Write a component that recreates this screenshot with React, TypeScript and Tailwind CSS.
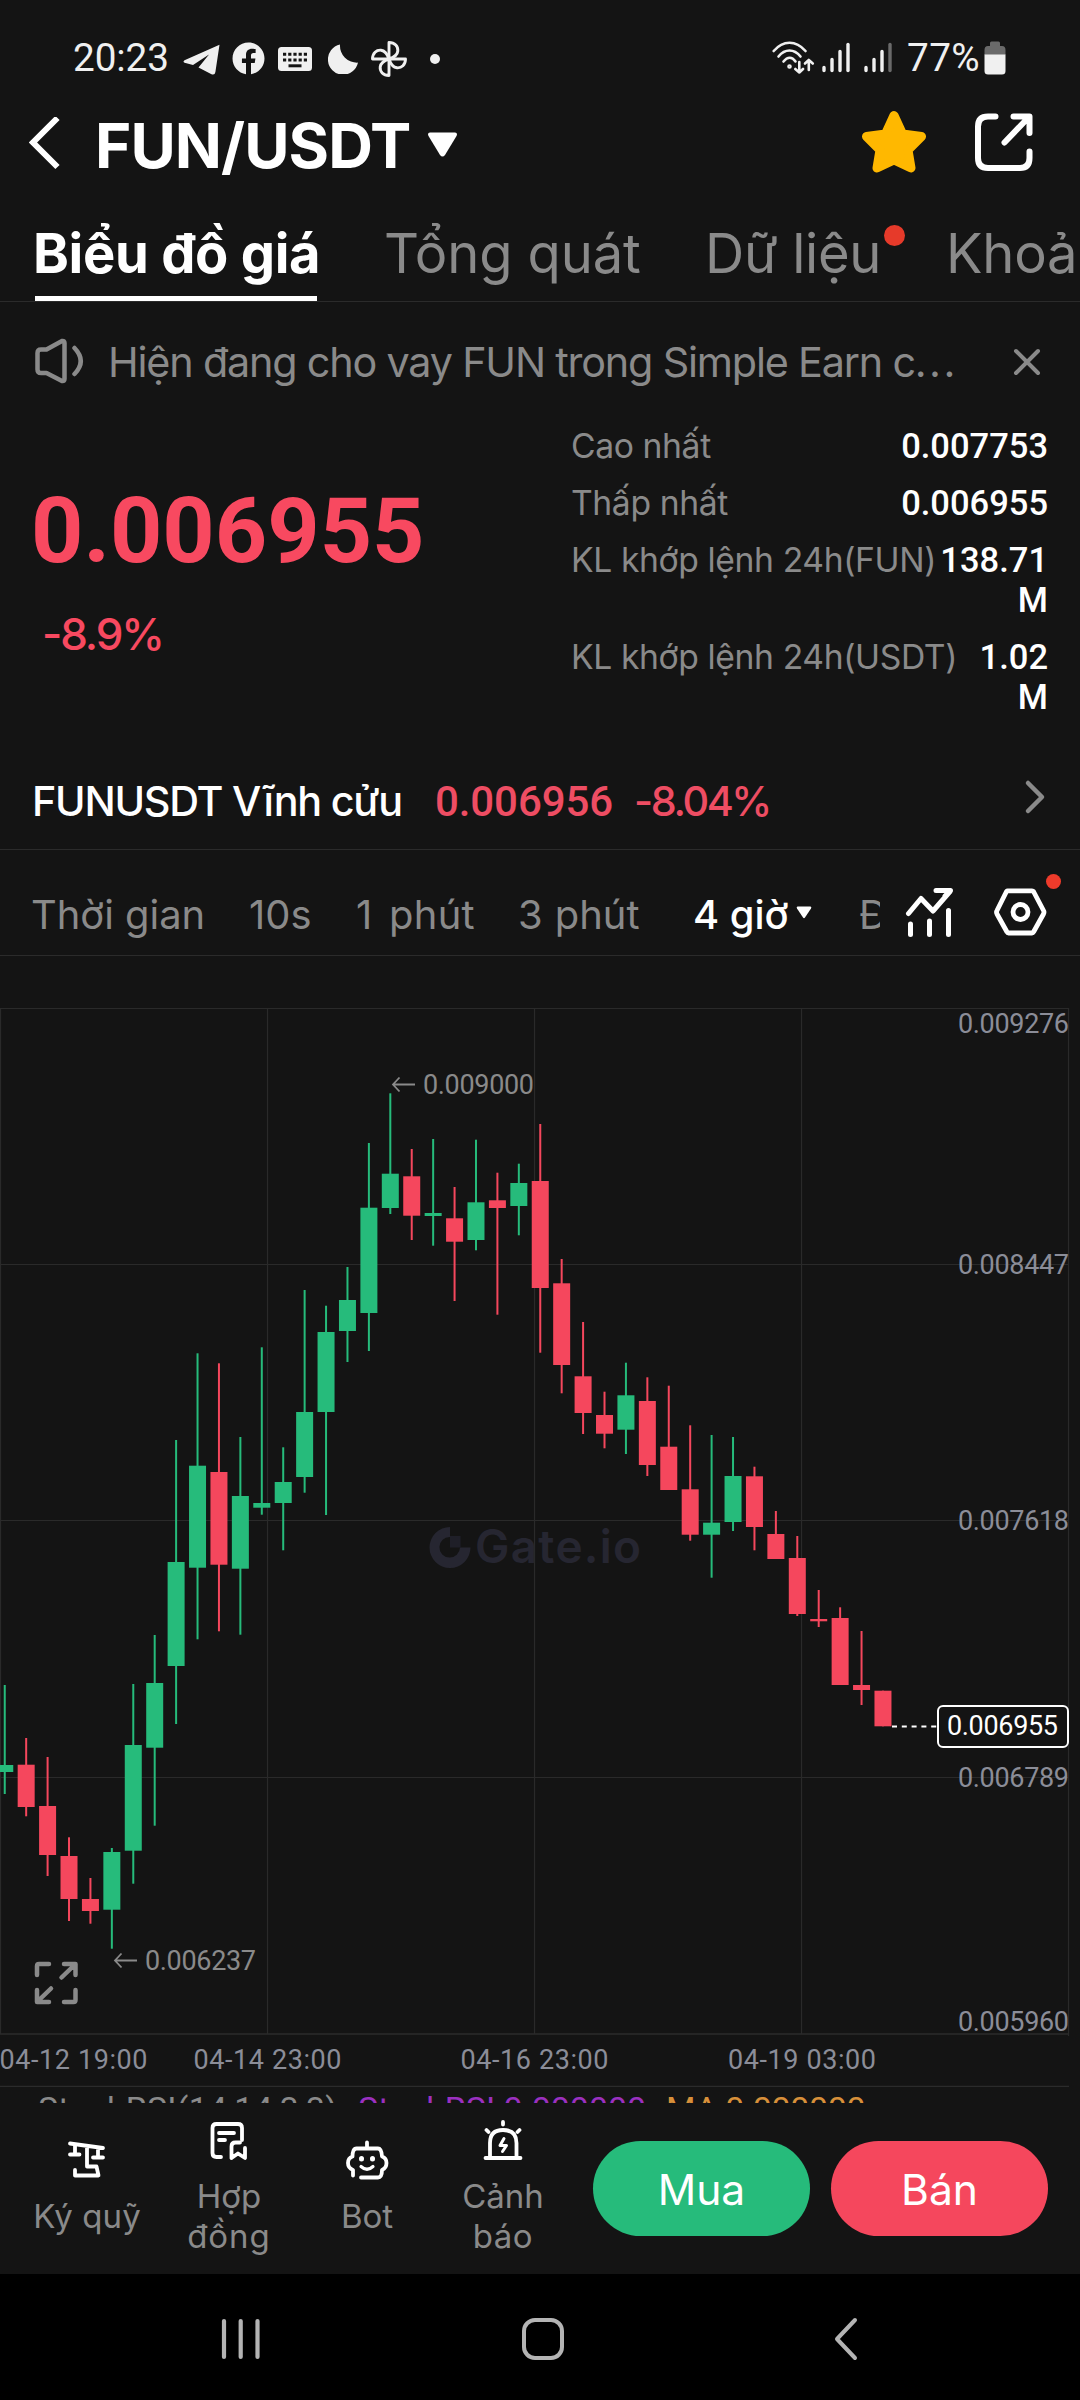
import { ReactNode } from "react";
import { FaFacebook } from "react-icons/fa";

type Candle = [string, number, number, number, number];

// direction, wick top, body top, body bottom, wick bottom
const candles: Candle[] = [
  ["up", 1685, 1765, 1772, 1794],
  ["down", 1738, 1764.7, 1807, 1816.3],
  ["down", 1757, 1806, 1855, 1876],
  ["down", 1837.3, 1856, 1899, 1921],
  ["down", 1878, 1899, 1911, 1923.7],
  ["up", 1848, 1852, 1909.7, 1948.7],
  ["up", 1684, 1745, 1850.7, 1883.7],
  ["up", 1635, 1683, 1747.7, 1825.7],
  ["up", 1440, 1562, 1666, 1724],
  ["up", 1353.3, 1465.7, 1567.7, 1639.3],
  ["down", 1363.3, 1472, 1564.7, 1631.3],
  ["up", 1437, 1496, 1568.7, 1634.7],
  ["up", 1347.3, 1503, 1507.7, 1514.7],
  ["up", 1447.3, 1482, 1503, 1550.3],
  ["up", 1290, 1412, 1477, 1492.7],
  ["up", 1305.7, 1332, 1412, 1515],
  ["up", 1267, 1300, 1331, 1362],
  ["up", 1143, 1207.7, 1313, 1351],
  ["up", 1093.3, 1173.7, 1208, 1214],
  ["down", 1149, 1176.3, 1215.7, 1240],
  ["up", 1139, 1213, 1216, 1245.7],
  ["down", 1187, 1218.3, 1241.7, 1301],
  ["up", 1139.7, 1202.3, 1240, 1250.3],
  ["down", 1172.7, 1200.3, 1208, 1314.7],
  ["up", 1163.7, 1183, 1206, 1235.3],
  ["down", 1124, 1181, 1288, 1352.7],
  ["down", 1259, 1283.3, 1365, 1393.3],
  ["down", 1322, 1376.3, 1413, 1434],
  ["down", 1391.7, 1415, 1433.7, 1448.3],
  ["up", 1362.7, 1395.3, 1429.7, 1454],
  ["down", 1377.3, 1401, 1465, 1476],
  ["down", 1385.7, 1446.7, 1490, 1490],
  ["down", 1425.3, 1489.3, 1534.7, 1540.7],
  ["up", 1435, 1522.7, 1534.7, 1577.7],
  ["up", 1437, 1476, 1522, 1531],
  ["down", 1466.7, 1476.3, 1527, 1550.3],
  ["down", 1511, 1534, 1559, 1559],
  ["down", 1536, 1558, 1614, 1616],
  ["down", 1590, 1619, 1621.3, 1627],
  ["down", 1607.3, 1618, 1685, 1685],
  ["down", 1631, 1685, 1690, 1705],
  ["down", 1690.7, 1690.7, 1726.3, 1726.3],
];

const prices: [string, number][] = [
  ["0.009276", 1032.5],
  ["0.008447", 1274],
  ["0.007618", 1529.5],
  ["0.006789", 1786.5],
  ["0.005960", 2030.5],
];

const dates: [string, number, number][] = [
  ["04-12 19:00", -0.5, 148],
  ["04-14 23:00", 193.5, 148],
  ["04-16 23:00", 460.5, 148],
  ["04-19 03:00", 728, 148],
];

function StatusBar() {
  return (
    <div className="flex h-[115px] items-center font-[family-name:Roboto,sans-serif] text-[38.7px] text-[#f0f0f0]">
      <span className="ml-[73px] mt-[1px] w-[110px] tracking-[-0.1px]">20:23</span>
      <svg className="mt-[4px] h-[31px] w-[37px]" viewBox="0 0 37 31" fill="currentColor">
        <path d="M36.5 .8 L1.5 16.3 Q-.5 17.6 1.6 18.8 L10 21 L26 10.5 L15.5 23.5 L28.5 30.2 Q31.8 31.5 32.4 28 Z" />
      </svg>
      <FaFacebook className="ml-[12px] mt-[1px] h-[33px] w-[33px]" />
      <svg className="ml-[13px] mt-[2px] h-[24px] w-[34px]" viewBox="0 0 34 24">
        <rect width="34" height="24" rx="3.5" fill="currentColor" />
        <path
          d="M5 7.3h24M5 13h24"
          stroke="#141414"
          strokeWidth="3"
          strokeDasharray="3.2 2"
        />
        <path d="M10.5 18.8h13" stroke="#141414" strokeWidth="3" />
      </svg>
      <svg className="ml-[16px] mt-[2px] h-[30px] w-[31px]" viewBox="0 0 31 30" fill="currentColor">
        <path d="M12 .6 A17 17 0 0 0 30 18.6 A15.2 15.2 0 1 1 12 .6 Z" />
      </svg>
      <svg
        className="ml-[11px] mt-[2px] h-[38px] w-[38px]"
        viewBox="-19 -19 38 38"
        fill="none"
        stroke="currentColor"
        strokeWidth="2.9"
        strokeLinejoin="round"
      >
        {[0, 90, 180, 270].map((deg) => (
          <path key={deg} transform={`rotate(${deg})`} d="M0 0 V-16.5 C6 -16.5 9.2 -12.5 8.8 -8 C8.5 -4.5 4.5 -1.5 0 0" />
        ))}
      </svg>
      <span className="ml-[22px] mt-[2px] h-[10px] w-[10px] rounded-full bg-[#f0f0f0]" />
      <svg
        className="ml-[332px] h-[33px] w-[43px]"
        viewBox="0 0 43 33"
        fill="none"
        stroke="currentColor"
        strokeWidth="2.6"
        strokeLinecap="round"
        strokeLinejoin="round"
      >
        <path d="M1.7 10 C11 -1 24 -1 33.5 10" />
        <path d="M6.5 15.5 C13 7.5 22 7.5 28.5 15.5" />
        <path d="M11.5 20.5 C15.5 15.5 20 15.5 23.5 20.5" />
        <circle cx="17.500" cy="25.500" r="1" />
        <path d="M27.3 21 V31.5 M23.3 28 L27.3 31.5 L31 28" />
        <path d="M36.8 29 V19 M33 22.5 L36.8 19 L40.8 22.5" />
      </svg>
      <Signal className="ml-[7px]" />
      <Signal className="ml-[14px]" weak />
      <span className="ml-[15px] mt-[1px] w-[73px] tracking-[0.4px]">77%</span>
      <svg className="ml-[4px] h-[34px] w-[22px]" viewBox="0 0 22 34">
        <path d="M6 5 V2 Q6 .5 7.5 .5 H14.5 Q16 .5 16 2 V5 H18 Q21.5 5 21.5 9 V14 H.5 V9 Q.5 5 4 5 Z" fill="#6a6a6a" />
        <path d="M.5 13.5 H21.5 V30 Q21.5 33.5 18 33.5 H4 Q.5 33.5 .5 30 Z" fill="currentColor" />
      </svg>
    </div>
  );
}

function Signal({ className, weak }: { className: string; weak?: boolean }) {
  return (
    <svg className={`h-[31px] w-[28px] ${className}`} viewBox="0 0 28 31" strokeWidth="3.4" strokeLinecap="round" stroke="currentColor">
      <path d="M2 25.5V28.5M10 17.5V28.5M18 9.5V28.5" />
      <path d="M26 2.5V28.5" stroke={weak ? "#6a6a6a" : "currentColor"} />
    </svg>
  );
}

function Header() {
  return (
    <div className="flex h-[58px] items-center text-white">
      <svg className="ml-[29px] h-[54px] w-[31px]" viewBox="0 0 31 54" fill="none" stroke="currentColor" strokeWidth="6">
        <path d="M28.5 1 L4 25.5 L28.5 50" />
      </svg>
      <h1 className="ml-[35px] mt-[3px] w-[319px] whitespace-nowrap text-[61.9px] leading-[58px] font-bold tracking-[-0.9px]">
        FUN/USDT
      </h1>
      <svg className="ml-[13px] mt-[1px] h-[25px] w-[31px]" viewBox="0 0 31 25" fill="currentColor">
        <path d="M3 .5 H28 Q31 .8 29.5 4 L18 23 Q15.5 26 13 23 L1.500 4 Q0 .8 3 .5 Z" />
      </svg>
      <svg className="ml-[403px] -mt-[5px] h-[64px] w-[66px]" viewBox="0 0 66 64" fill="#ffb800" stroke="#ffb800" strokeWidth="9" strokeLinejoin="round">
        <path d="M33 5.5 L41.5 24 L60.5 26.5 L47 40 L50 58 L33 50 L16 58 L19 40 L5.5 26.5 L24.5 24 Z" />
      </svg>
      <svg
        className="ml-[47px] -mt-[3px] h-[59px] w-[59px]"
        viewBox="0 0 59 59"
        fill="none"
        stroke="currentColor"
        strokeWidth="6"
        strokeLinecap="round"
        strokeLinejoin="round"
      >
        <path d="M21.5 3.5 H14 Q4 3.5 4 13.5 V45 Q4 55 14 55 H46 Q55.5 55 55.5 45 V38.5" />
        <path d="M39.5 3.5 H55.5 V20 M54 5 L30.5 29.5" />
      </svg>
    </div>
  );
}

function Tabs() {
  return (
    <div className="flex h-[129px] items-end gap-[67px] overflow-hidden border-b border-[#2b2b2b] pl-[35px] text-[54.3px] leading-[80px] whitespace-nowrap text-[#8a8a8a]">
      <div className="flex h-[88px] w-[282px] shrink-0 flex-col justify-between text-white">
        <span className="-ml-[2px] font-bold tracking-[-0.3px]">Biểu đồ giá</span>
        <span className="h-[5px] w-full bg-white" />
      </div>
      <div className="h-[88px] w-[254px] shrink-0 tracking-[-0.1px]">Tổng quát</div>
      <div className="relative h-[88px] w-[174px] shrink-0 tracking-[-0.3px]">
        Dữ liệu
        <span className="absolute top-[12px] left-[179px] h-[21px] w-[21px] rounded-full bg-[#e63a2a]" />
      </div>
      <div className="h-[88px] w-[134px] shrink-0 tracking-[-0.2px]">Khoả</div>
    </div>
  );
}

function Notice() {
  return (
    <div className="flex h-[121px] items-center text-[#8a8a8a]">
      <svg
        className="ml-[34px] -mt-[3px] h-[46px] w-[50px]"
        viewBox="0 0 50 46"
        fill="none"
        stroke="currentColor"
        strokeWidth="4.5"
        strokeLinecap="round"
        strokeLinejoin="round"
      >
        <path d="M3.5 15 Q3.5 11.5 7 11.5 H12.5 L28 3 Q30.5 2.5 30.5 5 V41 Q30.5 43.5 28 43 L12.5 35 H7 Q3.5 35 3.5 31.5 Z" />
        <path d="M40.5 10 Q53 23 40.5 36" />
      </svg>
      <p className="mt-[1px] ml-[24px] w-[869px] whitespace-nowrap text-[41.3px] tracking-[-1.18px]">
        Hiện đang cho vay FUN trong Simple Earn c<span className="tracking-[2.4px]">...</span>
      </p>
      <svg className="-mt-[1px] ml-[36px] h-[28px] w-[28px]" viewBox="0 0 28 28" stroke="currentColor" strokeWidth="4" strokeLinecap="round">
        <path d="M3 3 L25 25 M25 3 L3 25" />
      </svg>
    </div>
  );
}

function Stat({ label, children }: { label: string; children: ReactNode }) {
  return (
    <div className="flex justify-between leading-[40px]">
      <span className="text-[33.7px] whitespace-nowrap tracking-[-0.4px] text-[#8a8a8a]">{label}</span>
      <span className="text-right font-[family-name:Roboto,sans-serif] text-[34.5px] font-medium text-white">{children}</span>
    </div>
  );
}

function Summary() {
  return (
    <div className="flex h-[330px]">
      <div className="w-[571px] pt-[58px] pl-[31px] text-[#f84960]">
        <div className="font-[family-name:Roboto,sans-serif] text-[91.4px] leading-[100px] font-bold">0.006955</div>
        <div className="mt-[23px] ml-[11px] text-[44px] leading-[60px] font-medium tracking-[-2.1px]">-8.9%</div>
      </div>
      <div className="flex w-[477px] flex-col gap-[17px] pt-[3px]">
        <Stat label="Cao nhất">0.007753</Stat>
        <Stat label="Thấp nhất">0.006955</Stat>
        <Stat label="KL khớp lệnh 24h(FUN)">
          138.71
          <br />M
        </Stat>
        <Stat label="KL khớp lệnh 24h(USDT)">
          1.02
          <br />M
        </Stat>
      </div>
    </div>
  );
}

function Perpetual() {
  return (
    <div className="flex h-[97px] items-center border-b border-[#2b2b2b] text-[42px] font-medium whitespace-nowrap text-white">
      <span className="mt-[1px] ml-[32px] w-[403px] text-[41.3px] tracking-[-1.25px]">FUNUSDT Vĩnh cửu</span>
      <span className="mt-[1px] w-[199px] font-[family-name:Roboto,sans-serif] tracking-[-0.1px] text-[#ee4d63]">0.006956</span>
      <span className="mt-[1px] w-[150px] text-[41.3px] tracking-[-2.4px] text-[#ee4d63]">-8.04%</span>
      <svg
        className="ml-[240px] -mt-[8px] h-[36px] w-[22px]"
        viewBox="0 0 22 36"
        fill="none"
        stroke="#8a8a8a"
        strokeWidth="4.5"
        strokeLinecap="round"
        strokeLinejoin="round"
      >
        <path d="M4 4 L18 18 L4 32" />
      </svg>
    </div>
  );
}

function Periods() {
  return (
    <div className="flex h-[106px] items-end border-b border-[#2b2b2b] pl-[31px] text-[39.9px] leading-[81px] whitespace-nowrap text-[#8a8a8a]">
      <span className="w-[218px]">Thời gian</span>
      <span className="w-[107px]">10s</span>
      <span className="w-[162px] tracking-[0.3px] [word-spacing:5px]">1 phút</span>
      <span className="w-[175px] [word-spacing:1px]">3 phút</span>
      <span className="w-[103px] font-medium text-white">4 giờ</span>
      <svg className="mb-[36px] h-[13px] w-[16px]" viewBox="0 0 16 13" fill="#fff">
        <path d="M1.5 .5 H14.5 Q16 .8 15 2.5 L9 11.5 Q8 12.8 7 11.5 L1 2.5 Q0 .8 1.5 .5 Z" />
      </svg>
      <span className="ml-[47px] w-[21px] overflow-hidden">Đ</span>
      <svg
        className="mb-[17px] ml-[25px] h-[52px] w-[50px]"
        viewBox="0 0 50 52"
        fill="none"
        stroke="#fff"
        strokeWidth="5"
        strokeLinecap="round"
        strokeLinejoin="round"
      >
        <path d="M3.5 27.5 L16 12.5 L28 25 L45 5.5 M31 4.5 H45.5 M45 5 L40 10" />
        <path d="M5.5 38 V48.5 M24.5 35 V48.5 M43.5 24.5 V48.5" />
      </svg>
      <div className="relative mb-[17px] ml-[38px] h-[52px] w-[54px]">
        <svg className="h-[52px] w-[54px]" viewBox="0 0 54 52" fill="none" stroke="#fff" strokeWidth="4.8" strokeLinejoin="round">
          <path d="M14.5 4.8 H39 Q40 4.8 40.5 5.5 L50.5 24.5 Q51.5 26 50.5 28 L40.5 46 Q40 47 39 47 H15.5 Q14.5 47 14 46 L4 28 Q3 26 4 24.5 L13.5 5.5 Z" />
          <circle cx="27.5" cy="26" r="7.5" />
        </svg>
        <span className="absolute -top-[12px] left-[53px] h-[15px] w-[15px] rounded-full bg-[#ee3b2b]" />
      </div>
    </div>
  );
}

function Chart() {
  return (
    <svg className="block h-[1131px] w-full font-[family-name:Roboto,sans-serif] text-[27px]" viewBox="0 956 1080 1131">
      <path
        d="M0 1008.5H1069M0 1264.5H1069M0 1520.5H1069M0 1777.5H1069M.5 1008V2034M267.5 1008V2034M534.5 1008V2034M801.5 1008V2034M1068.5 1008V2036"
        stroke="#2a2a2a"
        strokeWidth="1.2"
      />
      <path d="M0 2034H1069M0 2086.5H1069" stroke="#2b2b2b" strokeWidth="1.5" />

      {/* watermark */}
      <g fill="#262631">
        <path d="M450 1527 A20.500 20.500 0 1 0 470.500 1547.500 H460 A10.300 10.300 0 1 1 450 1537 Z" />
        <rect x="450" y="1536" width="10.5" height="11.5" fill="#1f1f28" />
        <text x="475" y="1563" textLength="166" className="font-[family-name:Inter,sans-serif] text-[46px] font-semibold">
          Gate.io
        </text>
      </g>

      {candles.map(([dir, high, top, bottom, low], i) => {
        const x = 4.75 + i * 21.42;
        return (
          <g key={i} fill={dir === "up" ? "#26bb7b" : "#f5475d"}>
            <rect x={x - 1} y={high} width="2" height={low - high} />
            <rect x={x - 8.5} y={top} width="17" height={bottom - top} />
          </g>
        );
      })}

      <g fill="none" stroke="#8a8a8a" strokeWidth="1.8">
        <path d="M415 1084.5H393M399.5 1077.5L393 1084.5L399.5 1091.5" />
        <path d="M137 1960.5H115M121.5 1953.5L115 1960.5L121.5 1967.5" />
      </g>
      <g fill="#8a8a8a">
        <text x="423" y="1094" textLength="111">0.009000</text>
        <text x="145" y="1970" textLength="111">0.006237</text>
      </g>

      <g fill="#8b8d98">
        {prices.map(([label, y]) => (
          <text key={label} x="958" y={y} textLength="111">
            {label}
          </text>
        ))}
        {dates.map(([label, x, width]) => (
          <text key={label} x={x} y="2069" textLength={width}>
            {label}
          </text>
        ))}
      </g>

      <path d="M892 1726.5H937" stroke="#fff" strokeWidth="2" strokeDasharray="5 4.8" />
      <rect x="938" y="1706" width="130" height="41" rx="5" fill="#141414" stroke="#fff" strokeWidth="2" />
      <text x="947" y="1735" textLength="111" fill="#fff">
        0.006955
      </text>

      {/* full screen toggle */}
      <g fill="none" stroke="#8a8a8a" strokeWidth="4.5" strokeLinecap="round" strokeLinejoin="round">
        <path d="M37 1975V1966Q37 1964 39 1964H49M75.500 1975V1964H64M75 1964.500L61.500 1977.500" />
        <path d="M37 1990V2002H49M37.500 2001.500L51 1988.500M75.500 1990V2000Q75.500 2002 73.500 2002H64" />
      </g>
    </svg>
  );
}

function Indicator() {
  return (
    <div className="flex h-[16px] items-start overflow-hidden font-[family-name:Roboto,sans-serif] text-[33.8px] leading-[45px] whitespace-nowrap text-[#8a8a8a]">
      <span className="ml-[38px] w-[320px] tracking-[0.3px]">StochRSI(14,14,3,3)</span>
      <span className="w-[308px] tracking-[0.1px] text-[#9b30c0]">StochRSI:0.000000</span>
      <span className="tracking-[-0.25px] text-[#d8903a]">MA:0.000000</span>
    </div>
  );
}

function Action({ icon, className, children }: { icon: ReactNode; className: string; children: ReactNode }) {
  return (
    <div className={`flex flex-col items-center gap-[16px] ${className}`}>
      <svg
        className="-mt-[2px] h-[40px] w-[44px]"
        viewBox="0 0 44 40"
        fill="none"
        stroke="#fff"
        strokeWidth="3.8"
        strokeLinecap="round"
        strokeLinejoin="round"
      >
        {icon}
      </svg>
      <span className="text-center text-[33px] leading-[40px] text-[#8a8a8a]">{children}</span>
    </div>
  );
}

function BottomBar() {
  return (
    <div className="flex h-[171px] items-center bg-[#141414] pl-[16px]">
      <Action
        className="w-[142px]"
        icon={<path d="M5 3.5 L38 8 M10 4.5 V14 M5 14.5 H14.5 M33 8 V17 M28 17.5 H38 M22 6 V26.5 H31.5 L33.5 35.5 H10 V30" />}
      >
        <span className="tracking-[0.1px]">Ký quỹ</span>
      </Action>
      <Action
        className="w-[142px]"
        icon={
          <>
            <path d="M14 37 H9.5 Q5.5 37 5.5 33 V8 Q5.5 4 9.5 4 H31 Q35 4 35 8 V20" />
            <path d="M12 13 H27 M12 20 H18" />
            <path d="M24.5 38 V26.5 Q24.5 22.5 28.5 22.5 H33 M24.5 38 L31 33.5 L38 38 V28" />
          </>
        }
      >
        Hợp
        <br />
        <span className="tracking-[1px]">đồng</span>
      </Action>
      <Action
        className="w-[134px]"
        icon={
          <>
            <path d="M22 2.5 V8 M8 35.5 V30 Q3 28 3 23 Q3 18 7.5 16.5 Q7.5 8.5 11.5 8.5 H33 Q36.5 8.5 37 16.5 Q41.5 18 41.5 23 Q41.5 28 37 30 Q37 37.5 33 37.5 H16" />
            <path d="M16 26.5 Q22 32 28 26.5" strokeWidth="3.2" />
            <path d="M16.5 18.5 V19 M27.5 18.5 V19" strokeWidth="5" />
          </>
        }
      >
        Bot
      </Action>
      <Action
        className="w-[138px]"
        icon={
          <>
            <path d="M22 2 V4.5 M5.5 10 L7.5 12 M38.5 10 L36.5 12 M4.5 38 H39.5" />
            <path d="M9 37.5 V23 Q9 10 22 10 Q35.5 10 35.5 23 V37.5" />
            <path d="M23 18.5 L19 25.5 H25.5 L21.5 31.5" strokeWidth="3" />
          </>
        }
      >
        Cảnh
        <br />
        <span className="tracking-[0.5px]">báo</span>
      </Action>
      <button className="ml-[21px] h-[95px] w-[217px] rounded-full bg-[#26bb7b] pt-[2px] text-[42.6px] text-white">Mua</button>
      <button className="ml-[21px] h-[95px] w-[217px] rounded-full bg-[#f5475d] pt-[2px] text-[42.6px] text-white">Bán</button>
    </div>
  );
}

function NavBar() {
  return (
    <div className="flex h-[126px] items-center bg-black pt-[4px] pl-[221px] text-[#b4b4b4]">
      <svg className="h-[42px] w-[40px]" viewBox="0 0 40 42" stroke="currentColor" strokeWidth="4.2" strokeLinecap="round">
        <path d="M3 3V39M19.7 3V39M36.5 3V39" />
      </svg>
      <span className="ml-[261px] h-[42px] w-[42px] rounded-[13px] border-[4px] border-[#b4b4b4]" />
      <svg
        className="ml-[270px] h-[44px] w-[24px]"
        viewBox="0 0 24 44"
        fill="none"
        stroke="currentColor"
        strokeWidth="4"
        strokeLinecap="round"
        strokeLinejoin="round"
      >
        <path d="M21 3 L3 22 L21 41" />
      </svg>
    </div>
  );
}

export default function App() {
  return (
    <div className="h-[2400px] w-[1080px] overflow-hidden bg-[#141414] font-[family-name:Inter,sans-serif]">
      <StatusBar />
      <Header />
      <Tabs />
      <Notice />
      <Summary />
      <Perpetual />
      <Periods />
      <Chart />
      <Indicator />
      <BottomBar />
      <NavBar />
    </div>
  );
}
